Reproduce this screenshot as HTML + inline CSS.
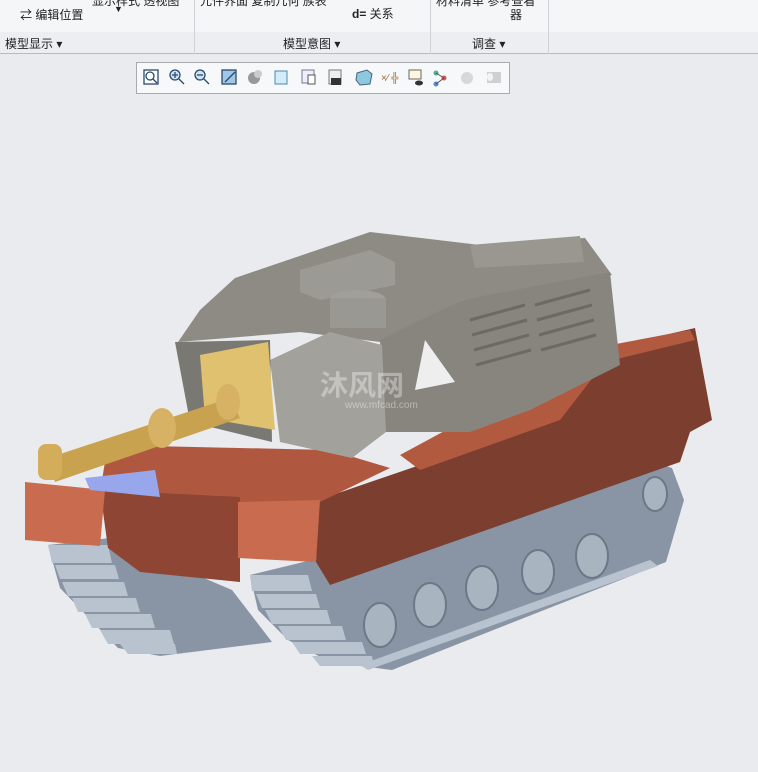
<!DOCTYPE html>
<html><head><meta charset="utf-8"><style>
body{margin:0;width:758px;height:772px;overflow:hidden;background:#e9ebee;font-family:"Liberation Sans","Noto Sans CJK SC",sans-serif;position:relative}
.rib{position:absolute;left:0;top:0;width:758px;height:32px;background:#f5f6f8}
.lab{position:absolute;left:0;top:32px;width:758px;height:21px;background:#eceef1;border-bottom:1px solid #b8babd}
.t{position:absolute;font-size:12px;color:#222;white-space:nowrap}
.div{position:absolute;top:0;width:1px;height:54px;background:#d0d2d5}
.tb{position:absolute;left:136px;top:62px;width:372px;height:30px;background:#f7f8f9;border:1px solid #a8aaad}
</style></head><body>
<div class="rib"></div>
<div class="lab"></div>
<div class="div" style="left:194px"></div><div class="div" style="left:430px"></div><div class="div" style="left:548px"></div>
<div class="t" style="left:92px;top:-8px">显示样式 透视图</div>
<div class="t" style="left:200px;top:-8px">元件界面 复制几何 族表</div>
<div class="t" style="left:436px;top:-8px">材料清单 参考查看</div>
<div class="t" style="left:20px;top:6px">⇄ 编辑位置</div>
<div class="t" style="left:114px;top:4px;font-size:9px">▼</div>
<div class="t" style="left:352px;top:5px"><b>d=</b> 关系</div>
<div class="t" style="left:510px;top:6px">器</div>
<div class="t" style="left:5px;top:35px">模型显示 ▾</div>
<div class="t" style="left:283px;top:35px">模型意图 ▾</div>
<div class="t" style="left:472px;top:35px">调查 ▾</div>
<div class="tb">
<svg width="372" height="30" viewBox="0 0 372 30">
<g stroke="#2a4a6a" fill="none" stroke-width="1.3">
<rect x="7" y="7" width="14" height="14" fill="#fff"/><circle cx="13" cy="13" r="4"/><line x1="16" y1="16" x2="20" y2="20"/>
<circle cx="38" cy="12" r="5" fill="#cfe2f3"/><line x1="42" y1="16" x2="47" y2="21"/><path d="M35 12h6M38 9v6"/>
<circle cx="63" cy="12" r="5" fill="#cfe2f3"/><line x1="67" y1="16" x2="72" y2="21"/><path d="M60 12h6"/>
<rect x="85" y="7" width="14" height="14" fill="#9fc7e8"/><line x1="88" y1="19" x2="98" y2="9"/>
</g>
<circle cx="117" cy="15" r="6" fill="#999"/><circle cx="121" cy="11" r="4" fill="#ccc"/>
<rect x="138" y="8" width="12" height="13" fill="#d5ecf8" stroke="#4a8ab0"/>
<rect x="165" y="7" width="12" height="13" fill="#eef" stroke="#778"/><rect x="171" y="12" width="7" height="9" fill="#fff" stroke="#555"/>
<rect x="192" y="7" width="12" height="14" fill="#eee" stroke="#777"/><rect x="194" y="15" width="10" height="7" fill="#333"/>
<path d="M220 10l10-3 5 4-2 10-10 1-4-5z" fill="#8ec8e0" stroke="#467"/>
<text x="244" y="18" font-size="10" fill="#963">×⁄ ╬</text>
<rect x="272" y="7" width="12" height="9" fill="#fff7dd" stroke="#666"/><ellipse cx="282" cy="20" rx="4" ry="2.5" fill="#333"/>
<circle cx="299" cy="10" r="2.5" fill="#5a9"/><circle cx="307" cy="15" r="2.5" fill="#d55"/><circle cx="299" cy="21" r="2.5" fill="#58c"/><path d="M299 10l8 5-8 6" stroke="#555" fill="none"/>
<circle cx="330" cy="15" r="6" fill="#d8d8d8"/>
<rect x="350" y="9" width="14" height="11" fill="#d0d0d0"/><ellipse cx="353" cy="14" rx="3" ry="4" fill="#f4f4f4"/>
</svg></div>
<svg style="position:absolute;left:0;top:0" width="758" height="772" viewBox="0 0 758 772">
<path d="M250 575L320 558 640 458 672 468 684 500 666 562 392 670 330 662 288 640 258 610Z" fill="#8995a5"/>
<path d="M48 545L110 538 232 590 272 642 160 656 118 648 60 588Z" fill="#8995a5"/>
<g fill="#b8c3cf">
<path d="M48 545h60l4 18H52z"/><path d="M55 565h60l4 14H60z"/><path d="M62 582h62l4 14H68z"/><path d="M72 598h64l4 14H78z"/><path d="M85 614h66l4 14H92z"/><path d="M100 630h70l4 14H108z"/><path d="M120 644h55l2 10H128z"/>
<path d="M250 575h58l4 16H252z"/><path d="M256 594h60l4 14H262z"/><path d="M265 610h62l4 14H272z"/><path d="M278 626h64l4 14H286z"/><path d="M292 642h70l4 12H300z"/><path d="M312 656h60l2 10H320z"/>
<path d="M360 665L650 560l8 6-290 104z"/>
</g>
<g fill="#a9b4c1" stroke="#6c7886" stroke-width="2">
<ellipse cx="380" cy="625" rx="16" ry="22"/><ellipse cx="430" cy="605" rx="16" ry="22"/><ellipse cx="482" cy="588" rx="16" ry="22"/><ellipse cx="538" cy="572" rx="16" ry="22"/><ellipse cx="592" cy="556" rx="16" ry="22"/><ellipse cx="655" cy="494" rx="12" ry="17"/>
</g>
<path d="M318 500L420 465 600 350 695 328 712 420 690 432 680 462 330 585 316 562Z" fill="#7c3f2f"/>
<path d="M400 455L600 347 690 330 695 340 605 362 560 420 420 470Z" fill="#b25a40"/>
<path d="M105 462L150 446 330 450 390 468 320 502 240 502 100 492Z" fill="#b0583f"/>
<path d="M100 490L240 497 240 582 140 572 108 548Z" fill="#8e4533"/>
<path d="M25 482L105 490 100 546 25 540Z" fill="#c96b4e"/>
<path d="M238 502L320 500 316 562 238 558Z" fill="#c96b4e"/>
<path d="M85 478L155 470 160 497 90 490Z" fill="#98a6ec"/>
<path d="M235 278L370 232 480 245 585 238 612 275 462 300 380 342 300 332 178 342 200 310Z" fill="#8d8b84"/>
<path d="M300 270L370 250 395 262 395 285 320 300 300 292Z" fill="#9c9a94"/>
<path d="M470 245L580 236 584 262 475 268Z" fill="#999790"/>
<path d="M380 340L462 300 610 272 620 365 530 410 470 432 385 432Z" fill="#87857e"/>
<path d="M270 360L330 332 382 345 386 432 352 458 280 442Z" fill="#a3a19b"/>
<path d="M175 342L270 340 272 442 190 422Z" fill="#7a7872"/>
<ellipse cx="358" cy="300" rx="28" ry="10" fill="#a19f99"/><rect x="330" y="298" width="56" height="30" fill="#9a9892"/>
<g stroke="#6b6a65" stroke-width="3"><path d="M470 320l55-15M472 335l55-15M474 350l55-15M476 365l55-15"/><path d="M535 305l55-15M537 320l55-15M539 335l55-15M541 350l55-15"/></g>
<path d="M425 340L455 382 415 390Z" fill="#eee"/>
<path d="M200 355L268 342 275 430 205 418Z" fill="#e0c170"/>
<path d="M48 458L230 398 240 418 55 482Z" fill="#c9a24f"/>
<ellipse cx="162" cy="428" rx="14" ry="20" fill="#d7b264"/><ellipse cx="228" cy="402" rx="12" ry="18" fill="#d7b264"/>
<rect x="38" y="444" width="24" height="36" rx="8" fill="#d4ad5b"/>
<text x="320" y="395" font-size="28" fill="rgba(255,255,255,0.35)" font-weight="bold">沐风网</text>
<text x="345" y="408" font-size="10" fill="rgba(255,255,255,0.4)">www.mfcad.com</text>
</svg>
</body></html>
